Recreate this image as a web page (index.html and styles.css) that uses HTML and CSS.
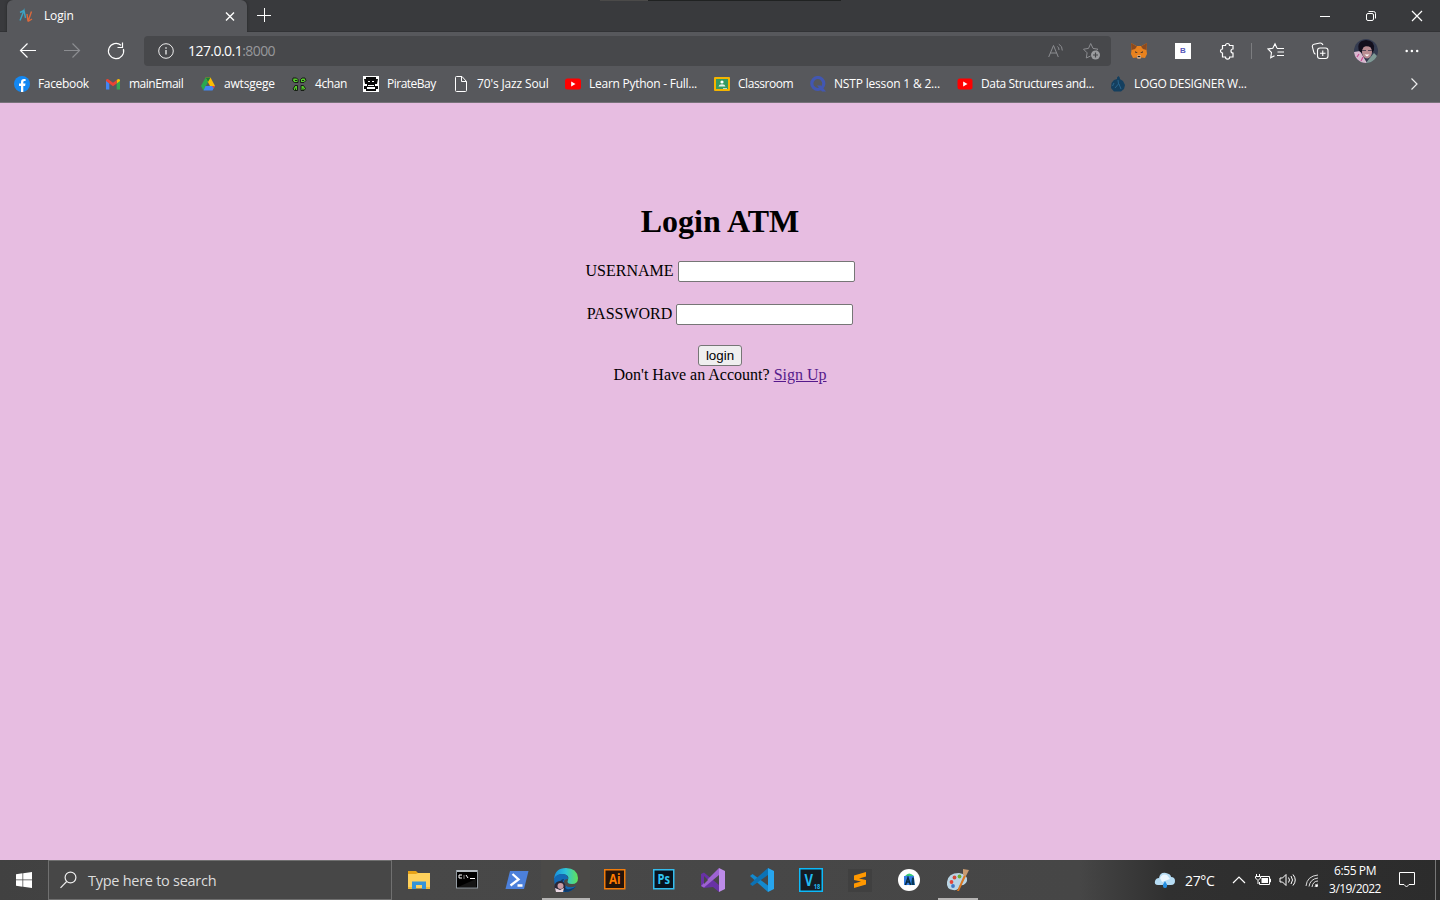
FILE: index.html
```html
<!DOCTYPE html>
<html lang="en">
<head>
<meta charset="utf-8">
<title>Login</title>
<link rel="stylesheet" href="styles.css">
</head>
<body>
<div class="screen">
  <header class="titlebar">
    <div class="behind"></div>
    <div class="tab">
      <svg class="tab-icon" width="16" height="16" viewBox="0 0 16 16" fill="none" stroke-width="1.4"><path d="M2 12.5 6 2.5 7.5 10M2 4.5 6 2.5" stroke="#3ba3c4"/><path d="M13.5 3.5 10 13.5 9 6M10 13.5 14 11" stroke="#d9693d"/></svg>
      <span class="tab-title">Login</span>
      <svg class="tab-close" width="10" height="10" viewBox="0 0 10 10" stroke="#fff" stroke-width="1.4"><path d="M1 1.500 9 9.500M9 1.500 1 9.500"/></svg>
    </div>
    <svg class="newtab" width="14" height="14" viewBox="0 0 14 14" stroke="#fff"><path d="M0 7.5H14M7.5 0V14"/></svg>
    <div class="window-controls">
      <svg width="46" height="32" viewBox="0 0 46 32" stroke="#fff"><path d="M18 16.5H28"/></svg>
      <svg width="46" height="32" viewBox="0 0 46 32" fill="none" stroke="#fff"><rect x="18.5" y="13.5" width="7" height="7" rx="1.5"/><path d="M20.5 11.5H25.5Q27.500 11.500 27.500 13.500V18.500"/></svg>
      <svg width="46" height="32" viewBox="0 0 46 32" stroke="#fff" stroke-width="1.2"><path d="M18 11 28 21M28 11 18 21"/></svg>
    </div>
  </header>

  <nav class="toolbar">
    <svg class="nav-btn" width="44" height="38" viewBox="0 0 44 38" fill="none" stroke="#fff" stroke-width="1.2"><path d="M36 18.500H20.500M27.500 11.500 20.500 18.500 27.500 25.500"/></svg>
    <svg class="nav-btn" width="44" height="38" viewBox="0 0 44 38" fill="none" stroke="#8c8d91" stroke-width="1.2"><path d="M20 18.500H35.500M28.500 11.500 35.500 18.500 28.500 25.500"/></svg>
    <svg class="nav-btn" width="44" height="38" viewBox="0 0 44 38" fill="none" stroke="#fff" stroke-width="1.2"><path d="M35.400 17A7.600 7.600 0 1 1 33 13.200M34.500 10.500V15.500H29.500"/></svg>
    <div class="address">
      <svg width="16" height="16" viewBox="0 0 16 16" fill="none" stroke="#eee"><circle cx="8" cy="8" r="7.300"/><path d="M8 7V11.500M8 4.300V5.700" stroke-width="1.300"/></svg>
      <span class="url"><span class="host">127.0.0.1</span><span class="port">:8000</span></span>
      <svg class="read-aloud" width="16" height="16" viewBox="0 0 16 16" fill="none" stroke="#8c8d91"><path d="M.7 14 5.500 2.500 10.300 14M2.300 10H8.700M9.500 3.500Q11 4.500 11 7M10.800 1.200Q14.500 3 14.300 7.500"/></svg>
      <svg width="18" height="18" viewBox="0 0 18 18" fill="none" stroke="#8c8d91"><path d="M8.500 14 4.300 16 5.100 10.800 1.500 7.200 6.500 6.400 8.700 1.500 11 6.400 16 7.200 14.500 8.600"/><circle cx="13.500" cy="13" r="4.500" fill="#9b9c9f" stroke="none"/><path d="M13.500 10.500V15.500M11 13H16" stroke="#47484b" stroke-width="1.200"/></svg>
    </div>
    <div class="tools">
      <svg width="18" height="18" viewBox="0 0 18 18"><path d="M1 1 6.500 4H11.500L17 1 16.500 8 17 12 15 16 11.500 15.500 10.500 16.500H7.500L6.500 15.500 3 16 1 12 1.500 8Z" fill="#e8821e"/><path d="M1 1 7 4.500 5 7 1.500 8ZM17 1 11 4.500 13 7 16.500 8Z" fill="#8a4a20"/><path d="M5 9 7.800 11 5.500 11ZM13 9 10.200 11 12.500 11Z" fill="#41332b"/><path d="M7 13.500H11L10.500 16.500H7.500Z" fill="#d5bfb2"/><path d="M7.700 14H10.300V15.200H7.700Z" fill="#222"/></svg>
      <div class="b-icon">B</div>
      <svg width="18" height="18" viewBox="0 0 18 18" fill="none" stroke="#fff" stroke-width="1.200"><path d="M4.500 3.500H7.500A2 2 0 0 1 11.500 3.500H15V7A2 2 0 1 0 15 11V15H11.700A2.100 2.100 0 0 1 7.500 15H4.500V11A2 2 0 0 1 4.500 7Z"/></svg>
      <span class="divider"></span>
      <svg width="18" height="18" viewBox="0 0 18 18" fill="none" stroke="#fff" stroke-width="1.100"><path d="M10 6.300 8 1.700 5.800 6.300 1 7 4.500 10.500 3.700 15.700 7.500 13.700M10 6.500H17M10.500 10H17M10 13.500H17"/></svg>
      <svg width="18" height="18" viewBox="0 0 18 18" fill="none" stroke="#fff" stroke-width="1.100"><path d="M4.500 12.200Q3 11.500 2.700 9.800L1.300 4.500Q1.200 2.700 3 2.300L9 1Q11 .8 12 3"/><rect x="6.500" y="6" width="10.500" height="10.500" rx="2.500"/><path d="M11.750 8.500V14M9 11.250H14.500"/></svg>
      <svg class="avatar" width="24" height="24" viewBox="0 0 24 24"><defs><clipPath id="face"><circle cx="12" cy="12" r="12"/></clipPath></defs><g clip-path="url(#face)"><path d="M0 0H24V24H0Z" fill="#343b50"/><path d="M0 13 6 12 10 19 13 24H0Z" fill="#d9b9d0"/><path d="M15 20 20 14 24 18V24H12Z" fill="#7f9995"/><path d="M5 12Q2 2 12 1 21 1 20 11L18 14H8Z" fill="#130f1d"/><ellipse cx="13" cy="13" rx="5" ry="6.500" fill="#b98c92"/><path d="M8 8.500Q12 6 18 8.500L17 5H9Z" fill="#130f1d"/><path d="M8 11.500H12M14 11.500H18" stroke="#564858" stroke-width="1"/><path d="M10.500 15.500H15.500L13 17.500Z" fill="#fff"/><path d="M3 18 5 15M7 22 9 18" stroke="#c84c93" stroke-width="1.200"/></g></svg>
      <svg width="18" height="18" viewBox="0 0 18 18" fill="#fff"><circle cx="3.700" cy="9" r="1.250"/><circle cx="8.900" cy="9" r="1.250"/><circle cx="14.200" cy="9" r="1.250"/></svg>
    </div>
  </nav>

  <nav class="bookmarks">
    <a><svg viewBox="0 0 16 16"><circle cx="8" cy="8" r="8" fill="#1488f2"/><path d="M7 16V10H5V7.600H7V6Q7 3 10 3H11.600V5.100H10.500Q9.300 5.100 9.300 6.200V7.600H11.500L11.100 10H9.300V16Z" fill="#fff"/></svg><span class="facebook">Facebook</span></a>
    <a><svg viewBox="0 0 16 16"><path d="M1 4.500V13.500H4.300V7Z" fill="#4285f4"/><path d="M11.700 7V13.500H15V4.500Z" fill="#34a853"/><path d="M11.700 4V7.500L15 5V4Q14 1.800 11.700 4Z" fill="#fbbc04"/><path d="M1 4Q2 1.800 4.300 4L8 6.800 11.700 4V7.500L8 10.300 1 5Z" fill="#ea4335"/></svg><span class="mail">mainEmail</span></a>
    <a><svg viewBox="0 0 16 16"><path d="M5.500 1.500 1 10 3.500 14.500 8 6Z" fill="#28a851"/><path d="M5.500 1.500H10.500L15 10H10Z" fill="#fbbc04"/><path d="M5.500 10H15L12.500 14.500H3.500Z" fill="#4285f4"/><path d="M12 10H15L13.700 12.300Z" fill="#ea4335"/><path d="M5.500 1.500H10.500L8 6Z" fill="#188038"/></svg><span class="drive">awtsgege</span></a>
    <a><svg viewBox="0 0 16 16" fill="#55c72b" stroke="#111" stroke-width=".9"><path d="M7 6.500H3.500L1.500 5 2 2H5.500L7 3.500ZM9.500 6.500V3.500L11 2H14L15 4.500 13 6.500ZM6.500 9.500V14.500H3.500L2 13 4 9.500ZM10 9.500H12.500L14.500 12.500 13 14.500H10Z"/><path d="M4 4.500H6M11 4.500H13M4.500 12.500V14M12 12.500V14"/></svg><span class="chan">4chan</span></a>
    <a><svg viewBox="0 0 16 16"><path d="M0 0H16V16H0Z" fill="#fff"/><path d="M3 1H13V3L15 3 14 8H12V10H15V13H12V11H4V13H1V10H4V8H2L1 3H3ZM3 13H13V15H3Z" fill="#080808"/><path d="M5 9H11V10H5Z" fill="#fff"/><path d="M5 5H7V6H5ZM9 5H11V6H9Z" fill="#fff"/></svg><span class="pirate">PirateBay</span></a>
    <a><svg viewBox="0 0 16 16" fill="none" stroke="#fff"><path d="M2.500 1.500Q2.500.5 3.500.5H9L13.500 5.500V14.500Q13.500 15.500 12.500 15.500H3.500Q2.500 15.500 2.500 14.500ZM8.500.5V5.500H13.500"/></svg><span class="jazz">70's Jazz Soul</span></a>
    <a><svg viewBox="0 0 16 16"><rect y="2.500" width="16" height="11" rx="2.500" fill="#f00"/><path d="M6.200 5.500V10.500L10.500 8Z" fill="#fff"/></svg><span class="python">Learn Python - Full...</span></a>
    <a><svg viewBox="0 0 16 16"><rect y="1" width="16" height="14" rx="1" fill="#f4b400"/><path d="M2 3H14V13H2Z" fill="#349a62"/><circle cx="8" cy="6" r="1.600" fill="#fff"/><path d="M4.500 10.500Q5 8.300 8 8.300T11.500 10.500ZM9 12.300H13V13H9Z" fill="#e5f1eb"/></svg><span class="classroom">Classroom</span></a>
    <a><svg viewBox="0 0 16 16"><circle cx="7.800" cy="7.500" r="6" fill="none" stroke="#4257b2" stroke-width="3.200"/><path d="M7 9.500H11L16 15.500H12Z" fill="#4257b2"/></svg><span class="nstp">NSTP lesson 1 &amp; 2...</span></a>
    <a><svg viewBox="0 0 16 16"><rect x=".5" y="2.500" width="15" height="11" rx="2.500" fill="#f00"/><path d="M6.200 5.500V10.500L10.500 8Z" fill="#fff"/></svg><span class="data">Data Structures and...</span></a>
    <a><svg viewBox="0 0 16 16"><path d="M7 1.500 8.500 0 10 2 9.800 3 13 5 15 9 14 13 11 15.500H4L1 12 1.500 7 4 4 7 3Z" fill="#143f5f"/><path d="M8 4 8.500 8 5 12M9 8 11 13M4 7 2.500 10" stroke="#28658e" fill="none"/></svg><span class="logo-label">LOGO DESIGNER W...</span></a>
    <svg class="more" viewBox="0 0 16 16" fill="none" stroke="#eee" stroke-width="1.200"><path d="M5.500 2.500 11 8 5.500 13.500"/></svg>
  </nav>

  <main class="page">
    <h1>Login ATM</h1>
    <form>
      <div class="field"><label for="username">USERNAME</label><input id="username" type="text"></div>
      <div class="field"><label for="password">PASSWORD</label><input id="password" type="password"></div>
      <button type="button">login</button>
    </form>
    <p>Don't Have an Account? <a href="#">Sign Up</a></p>
  </main>

  <footer class="taskbar">
    <div class="start"><svg width="16" height="16" viewBox="0 0 16 16" fill="#fff"><path d="M0 2.200 6.500 1.300V7.500H0ZM7.200 1.200 16 0V7.500H7.200ZM0 8.300H6.500V14.700L0 13.800ZM7.200 8.300H16V16L7.200 14.800Z"/></svg></div>
    <div class="search"><svg width="18" height="18" viewBox="0 0 18 18" fill="none" stroke="#eee" stroke-width="1.200"><circle cx="10.500" cy="6.500" r="5.400"/><path d="M6.700 10.500.5 16.800"/></svg><span>Type here to search</span></div>
    <div class="apps">
      <div><svg viewBox="0 0 24 24"><path d="M1 3H9L11 5H22V20H1Z" fill="#e8a317"/><path d="M1 6H9L11 5H23V20.500H1Z" fill="#ffd15c"/><path d="M5 13.500H19V21H15V17H9V21H5Z" fill="#3593d8"/><path d="M1 19H5V21H1ZM19 19H23V21H19Z" fill="#f2bb3a"/></svg></div>
      <div><svg viewBox="0 0 24 24"><path d="M0 2H22V20.500H0Z" fill="#929aa1"/><path d="M1 4H21V19.500H1Z" fill="#000"/><path d="M1 3H21" stroke="#d8dee2"/><path d="M6 7H3V10H6M8 7.500V8.500M8 9.500V10.500M10 7 12 10M14 10.500H19" fill="none" stroke="#fff" stroke-width="1"/><path d="M2 19 20 11V19Z" fill="#151515"/></svg></div>
      <div><svg viewBox="0 0 24 24"><path d="M5 3H23.500L19 21H.5Z" fill="#4c80da"/><path d="M7.500 6 13.500 11.500 5.500 17.500M12.500 17.500H17.500" fill="none" stroke="#fff" stroke-width="2.300"/></svg></div>
      <div class="active edge"><svg viewBox="0 0 24 24"><defs><linearGradient id="sea"><stop stop-color="#168de0"/><stop offset=".5" stop-color="#2fc5d8"/><stop offset="1" stop-color="#62e356"/></linearGradient></defs><path d="M0 11Q1 0 12 0 23 0 24 10 24 16 18 16 12 16 14 12 16 7 9 6 3 6 0 11Z" fill="url(#sea)"/><path d="M0 11Q2 6 8 6 14 6 14 11 8 11 11 17 15 21 22 18 17 25 9 24 0 21 0 11Z" fill="#1269b5"/><path d="M10 11Q6 18 13 21 18 22 22 18 18 24 11 24 4 20 6 14 7 11 10 11Z" fill="#0c3b6e"/><circle cx="6" cy="18.500" r="5.500" fill="#292737"/><circle cx="6.500" cy="18" r="3" fill="#c99ba3"/><path d="M1 20 6 22 10 20 9 24H2Z" fill="#ebd8e3"/></svg></div>
      <div><svg viewBox="0 0 24 24"><rect x="1.750" y="1.750" width="20" height="19" fill="#24130a" stroke="#f27c0b" stroke-width="1.500"/><text class="adobe" x="6" y="15.800" textLength="11.500" lengthAdjust="spacingAndGlyphs" fill="#ff7c00">Ai</text></svg></div>
      <div><svg viewBox="0 0 24 24"><rect x="1.750" y="1.750" width="20" height="19" fill="#08121d" stroke="#34bdee" stroke-width="1.500"/><text class="adobe" x="5.500" y="15.800" textLength="12.500" lengthAdjust="spacingAndGlyphs" fill="#31c5f0">Ps</text></svg></div>
      <div><svg viewBox="0 0 24 24"><path d="M0 6 3 4.500 18 17V24L12 19 3 20 0 18Z" fill="#6832a5"/><path d="M0 18 18 0V7L3 19.500Z" fill="#9d63d1"/><path d="M18 0 24 3V21L18 24Z" fill="#bd8be9"/><path d="M3 8V16L7 12Z" fill="#484848"/></svg></div>
      <div><svg viewBox="0 0 24 24"><path d="M0 8 2.500 6 18 17.500V24Z" fill="#1389ce"/><path d="M0 16 18 0V7L2.500 18Z" fill="#0c72b5"/><path d="M18 0 24 3V21L18 24Z" fill="#27a5ee"/></svg></div>
      <div><svg viewBox="0 0 24 24"><rect x=".75" y=".75" width="22.500" height="22.500" fill="#151c22" stroke="#0cbafa" stroke-width="1.500"/><text class="vegas" x="5.500" y="17.500" textLength="8.500" lengthAdjust="spacingAndGlyphs" fill="#21baf0">V</text><text class="eighteen" x="14.800" y="20.500" textLength="6.500" lengthAdjust="spacingAndGlyphs" fill="#21baf0">18</text></svg></div>
      <div><svg viewBox="0 0 24 24"><path d="M0 1H24V24H0Z" fill="#404040"/><path d="M6 7.500 18 4V8.500L11 10.500 18 12V16.500L6 20V15.500L13 13.500 6 12Z" fill="#ff9800"/></svg></div>
      <div><svg viewBox="0 0 24 24"><circle cx="12" cy="12" r="11" fill="#fff"/><path d="M7 8H17V17H7Z" fill="#367ee2"/><path d="M8 8Q12 3 17 8Z" fill="#36c97a"/><path d="M13 17 15 10H17L18 17Z" fill="#155f9e"/><path d="M8.500 17 11 9.500 13.500 17M9.500 14H12.500M16 9.500V17" fill="none" stroke="#092b42" stroke-width="1.500"/></svg></div>
      <div class="active paint"><svg viewBox="0 0 24 24"><path d="M1 14Q2 5 13 5 22 6 21 13 19 18 14 17 13 23 7 22 0 21 1 14Z" fill="#b9d5e5"/><circle cx="5.500" cy="14" r="1.900" fill="#e4453a"/><circle cx="8.500" cy="9.500" r="1.900" fill="#d24b3b"/><circle cx="13.500" cy="8.500" r="1.900" fill="#6dac35"/><circle cx="7" cy="18" r="1.900" fill="#3e79c6"/><path d="M11 23 18 7 20 8 13 23Z" fill="#d97822"/><path d="M17 1 23 2 20 8 17 7Z" fill="#c89b70"/></svg></div>
    </div>
    <div class="weather"><svg width="22" height="18" viewBox="0 0 22 18"><path d="M4 14Q0 14 1 10 2 7 5 7 6 1 12 2 17 3 17 6 21 6 21 10 21 14 17 14Z" fill="#b6dcf4"/><path d="M6 7Q8 2 13 4L16 8 8 11Z" fill="#ecf7ff"/><path d="M11 10 13 13.500Q13.500 17 11 17T9 13.500Z" fill="#248ee1"/></svg><span>27°C</span></div>
    <div class="tray">
      <svg width="14" height="16" viewBox="0 0 14 16" fill="none" stroke="#fff" stroke-width="1.200"><path d="M1 11 7 5 13 11"/></svg>
      <svg width="17" height="16" viewBox="0 0 17 16" fill="none" stroke="#fff"><path d="M6 4.500H14.500V12.500H4.500V10M14.500 7H15.500V10H14.500M1.500 2V4.500M4.500 2V4.500M.5 4.500H5.500V6L3 8.500.5 6ZM3 8.500V12"/><path d="M6.500 6H13V11H6.500Z" fill="#fff" stroke="none"/></svg>
      <svg width="18" height="16" viewBox="0 0 18 16" fill="none" stroke="#fff"><path d="M1 6H3.500L7 2.500V13.500L3.500 10H1ZM9.500 5.500Q11.500 8 9.500 10.500M12 4Q15 8 12 12M14 2.500Q18.500 8 14 13.500"/></svg>
      <svg width="14" height="16" viewBox="0 0 14 16" fill="none" stroke="#ddd"><path d="M1 14Q2 4 13 3M4 14.500Q5 7 13 6M7 15Q8 9 13 9"/><circle cx="11.500" cy="13.500" r="1.500" fill="#fff" stroke="none"/><path d="M10 15Q10 12 13 12" stroke="#bbb"/></svg>
    </div>
    <div class="clock"><span>6:55 PM</span><span class="date">3/19/2022</span></div>
    <svg class="notice" width="18" height="18" viewBox="0 0 18 18" fill="none" stroke="#fff"><path d="M1.500 1.500H16.500V13.500H11L8.500 16 6 13.500H1.500Z"/></svg>
    <span class="show-desktop"></span>
  </footer>
</div>
</body>
</html>
```
FILE: styles.css
```css
* { box-sizing: border-box; }
body { margin: 0; font-family: "Open Sans", "Noto Sans", sans-serif; }
svg { display: block; flex: none; }
.screen { width: 1440px; height: 900px; display: flex; flex-direction: column; overflow: hidden; color: #fff; }

.titlebar { height: 32px; flex: none; display: flex; background: #393a3d; border-bottom: 1px solid #323336; position: relative; }
.behind { position: absolute; left: 600px; top: 0; width: 241px; height: 1px; background: linear-gradient(90deg, #4b4a49 48px, #202222 48px); }
.tab { width: 240px; height: 32px; margin-left: 7px; padding: 0 12px 0 11px; display: flex; align-items: center; background: #57585c; border-radius: 6px 6px 0 0; box-shadow: 0 0 3px #242527; clip-path: inset(-3px -3px 0 -3px); }
.tab-title { font-size: 12px; line-height: 16px; letter-spacing: -.15px; margin-left: 10px; padding-bottom: 1px; flex: 1; }
.newtab { margin: 8px 0 0 10px; }
.window-controls { display: flex; margin-left: auto; }

.toolbar { height: 38px; flex: none; display: flex; align-items: center; background: #57585c; }
.address { width: 967px; height: 30px; margin-left: 12px; padding: 0 11px 0 14px; display: flex; align-items: center; background: #47484b; border-radius: 4px; }
.url { font-size: 14px; letter-spacing: -.55px; margin-left: 14px; padding-bottom: 2px; flex: 1; }
.port { color: #97989b; }
.read-aloud { margin-right: 18px; }
.tools { flex: 1; display: grid; grid-template-columns: 44px 44px 44px 5px 44px 44px 48px 44px; justify-items: center; align-items: center; padding-left: 6px; }
.b-icon { width: 16px; height: 16px; background: #fff; color: #5556b8; font: bold 8px/16px "Liberation Sans", sans-serif; text-align: center; }
.divider { width: 1px; height: 16px; background: #7c7d80; }

.bookmarks { height: 33px; flex: none; display: grid; grid-template-columns: 91px 95px 91px 72px 90px 112px 149px 96px 147px 153px 1fr 16px; padding: 0 18px 4px 14px; align-items: center; background: #57585c; border-bottom: 1px solid #77727a; }
.bookmarks a { display: flex; align-items: center; gap: 8px; white-space: nowrap; }
.bookmarks svg { width: 16px; height: 16px; }
.bookmarks span { font-size: 12px; line-height: 18px; }
.facebook { letter-spacing: -.33px; }
.mail { letter-spacing: -.5px; }
.drive { letter-spacing: -.2px; }
.chan { letter-spacing: -.38px; }
.pirate { letter-spacing: -.5px; }
.jazz { letter-spacing: -.15px; }
.python { letter-spacing: -.26px; }
.classroom { letter-spacing: -.45px; }
.nstp { letter-spacing: -.18px; }
.data { letter-spacing: -.37px; }
.logo-label { letter-spacing: -.28px; }

.page { flex: 1; background: #e7bde1; color: #000; padding-top: 100px; display: flex; flex-direction: column; align-items: center; font: 16px/18px "Liberation Serif", serif; }
.page h1 { font-size: 32px; line-height: 37px; margin: 0 0 21px; }
.page form { display: flex; flex-direction: column; align-items: center; }
.field { display: flex; align-items: center; gap: 4px; height: 21px; margin-bottom: 22px; }
.field + .field { margin-bottom: 20px; }
.field label { position: relative; top: -1px; }
.field input { width: 177px; height: 21px; border: 1px solid #767676; border-radius: 2px; background: #fff; padding: 1px 2px; }
.page button { width: 44px; height: 21px; padding: 0; border: 1px solid #767676; border-radius: 3px; background: #efefef; color: #000; font: 13.333px "Liberation Sans", sans-serif; }
.page p { margin: 0; }
.page p a { color: #551a8b; }

.taskbar { height: 40px; flex: none; display: flex; align-items: center; background: linear-gradient(90deg, #414141, #484848 28%, #464646 75%, #303030 81%, #2c2c2c); }
.start { width: 48px; display: flex; justify-content: center; }
.search { width: 344px; height: 40px; border: 1px solid #707070; background: #474747; display: flex; align-items: center; gap: 10px; padding-left: 11px; color: #ddd; font-size: 14.5px; }
.search span { letter-spacing: -.27px; }
.apps { display: flex; height: 40px; margin-left: 2px; }
.apps > div { width: 49px; display: flex; justify-content: center; position: relative; padding-top: 8px; }
.apps svg { width: 24px; height: 24px; }
.active::after { content: ""; position: absolute; bottom: 0; height: 2px; background: #b5b4b3; }
.edge { background: #4b4a48; }
.edge::after { left: 1px; width: 48px; }
.paint::after { left: 5px; width: 40px; }
.adobe { font: bold 14px "Open Sans", sans-serif; }
.vegas { font: bold 16px "Open Sans", sans-serif; }
.eighteen { font: bold 6.5px "Open Sans", sans-serif; }
.weather { margin-left: auto; width: 78px; display: flex; align-items: center; gap: 9px; font-size: 14px; letter-spacing: -.35px; }
.tray { display: flex; align-items: center; gap: 9px; width: 96px; }
.tray svg:nth-child(3), .tray svg:nth-child(2) { margin-right: -1px; }
.tray svg:nth-child(3) { margin-left: -1px; }
.clock { width: 54px; display: flex; flex-direction: column; align-items: center; font-size: 12px; line-height: 18px; letter-spacing: -.4px; white-space: nowrap; }
.date { letter-spacing: -.56px; }
.notice { margin: 0 19px 0 16px; }
.show-desktop { width: 5px; height: 40px; border-left: 1px solid #777; }
```
